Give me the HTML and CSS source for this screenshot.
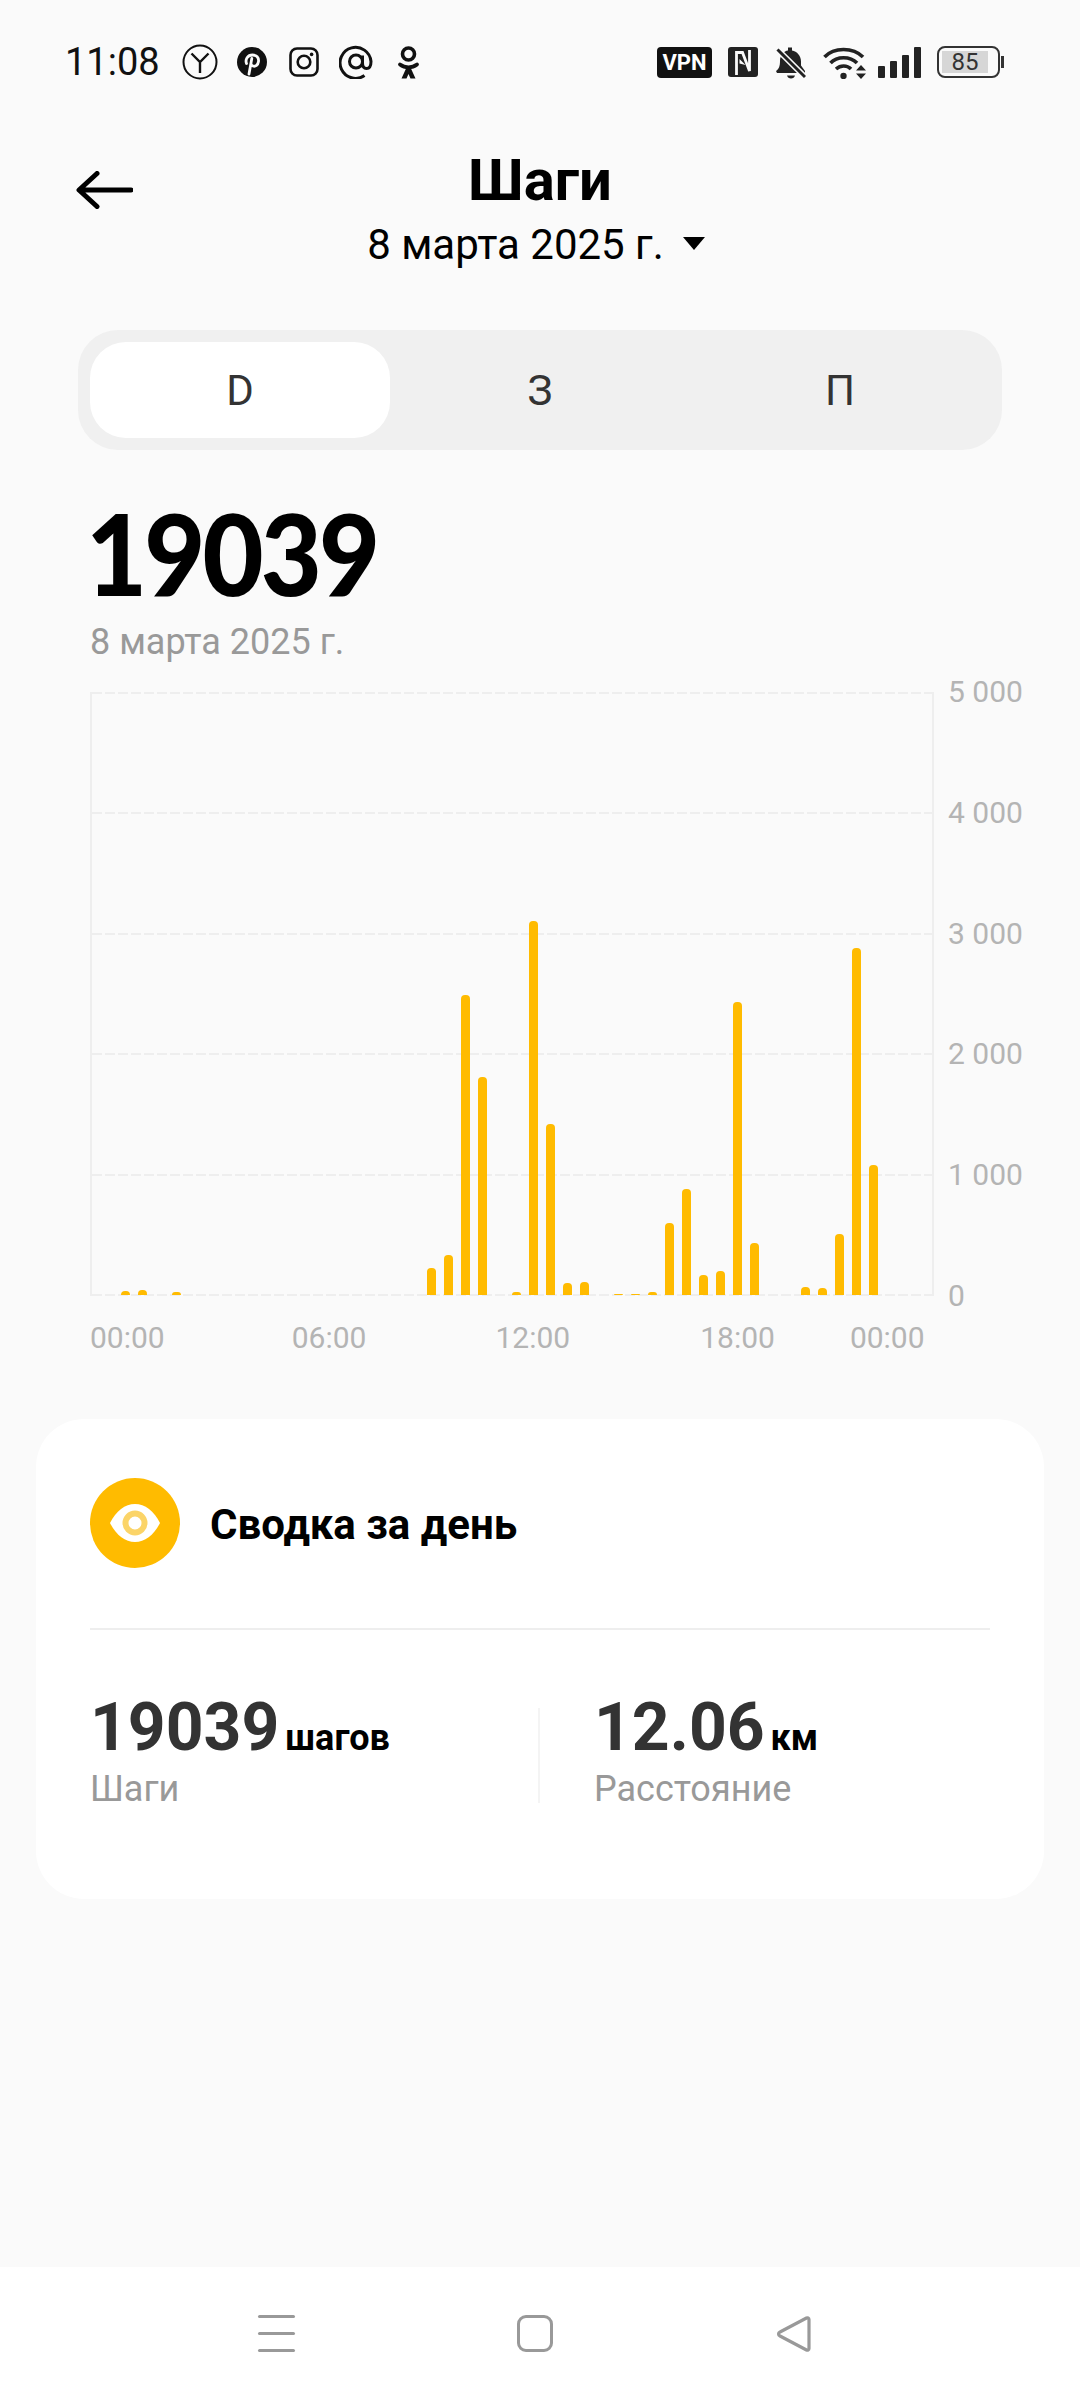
FILE: index.html
```html
<!DOCTYPE html>
<html lang="ru">

<head>
    <meta charset="utf-8">
    <title>Шаги</title>
    <link rel="stylesheet" href="styles.css">
</head>

<body>
    <div class="status-bar">
        <div class="time">11:08</div>
        <svg class="ic ic-ya" viewBox="0 0 36 36">
            <circle cx="18" cy="18" r="16.5" fill="none" stroke="#111" stroke-width="2"/>
            <path d="M9.500 9.500l8.500 8.500 8.500-8.500M18 18V29" fill="none" stroke="#111" stroke-width="2.400"/>
        </svg>
        <svg class="ic ic-pin" viewBox="0 0 30 30">
            <circle cx="15" cy="15" r="15" fill="#111"/>
            <path d="M9.500 16.500c-1.500-4 1-8.500 6-8.500 4 0 6.500 2.500 6 6.500-.5 3.500-3 5.500-5.500 4.500-1.500-.5-2-1.500-2-2.500M14.800 11.500L12 27" fill="none" stroke="#fafafa" stroke-width="2.800" stroke-linecap="round"/>
        </svg>
        <svg class="ic ic-insta" viewBox="0 0 30 30">
            <rect x="1.500" y="1.500" width="27" height="27" rx="6.500" fill="none" stroke="#111" stroke-width="2.600"/>
            <circle cx="15" cy="15" r="6.300" fill="none" stroke="#111" stroke-width="2.600"/>
            <circle cx="22.600" cy="7.400" r="1.800" fill="#111"/>
        </svg>
        <svg class="ic ic-at" viewBox="0 0 34 34">
            <path d="M25.500 30.500A15.500 15.500 0 1 1 32 16.500c0 4-1.500 7-4.500 7s-4-2.500-4-5.500v-7.500M23.500 16.500a6.500 6.500 0 1 1-13 0 6.500 6.500 0 0 1 13 0z" fill="none" stroke="#111" stroke-width="3"/>
        </svg>
        <svg class="ic ic-ok" viewBox="0 0 23 33">
            <circle cx="11.500" cy="8" r="6" fill="none" stroke="#111" stroke-width="3.600"/>
            <path d="M3 18.500c5 3.800 12 3.800 17 0" fill="none" stroke="#111" stroke-width="3.800" stroke-linecap="round"/>
            <path d="M9.500 21.500L4.500 32.500h5l2-4.500 2 4.500h5L13.500 21.500z" fill="#111"/>
        </svg>
        <div class="status-right">
            <span class="vpn">VPN</span>
            <svg class="ic ic-nfc" viewBox="0 0 30 30">
                <rect width="30" height="30" rx="3" fill="#222"/>
                <path d="M8.500 28V5.500h6L21.500 24V3" fill="none" stroke="#fafafa" stroke-width="2.800"/>
                <path d="M11.500 12l6 6-6-1.500z" fill="#fafafa"/>
            </svg>
            <svg class="ic ic-bell" viewBox="0 0 30 33">
                <path d="M0 25c3-2 4-5 4-10C4 9 8 5 12 4.500V1.500h4v3c5 1 9 5 9 11v4l4 5.500V27H1z" fill="#222"/>
                <path d="M11 29.500h8c-.5 2-2 3-4 3s-3.500-1-4-3z" fill="#222"/>
                <path d="M2 4l26 26" stroke="#fafafa" stroke-width="6"/>
                <path d="M1.500 3.500L29 31" stroke="#222" stroke-width="3"/>
            </svg>
            <svg class="ic ic-wifi" viewBox="0 0 44 33">
                <path d="M1.500 11C11 1 30 1 40 11M7.500 17C14 10 27 10 34 17M13 23c4.500-4 11-4 15 0" fill="none" stroke="#222" stroke-width="3.600"/>
                <circle cx="20.500" cy="30" r="3.200" fill="#222"/>
                <path d="M33 24.500l5-5.500 5 5.500zM33 27.500l5 5.500 5-5.500z" fill="#222"/>
            </svg>
            <svg class="ic ic-signal" viewBox="0 0 43 31">
                <rect x="0" y="19" width="7" height="12" rx="1" fill="#222"/>
                <rect x="12" y="14" width="7" height="17" rx="1" fill="#222"/>
                <rect x="24" y="8" width="7" height="23" rx="1" fill="#222"/>
                <rect x="36" y="0" width="7" height="31" rx="1" fill="#222"/>
            </svg>
            <div class="battery">
                <div class="battery-body"><span class="battery-fill">85</span></div>
                <div class="battery-tip"></div>
            </div>
        </div>
    </div>

    <div class="header">
        <svg class="back" viewBox="0 0 57 38">
            <path d="M55 19H4M21 2.500L3 19l18 16.500" fill="none" stroke="#000" stroke-width="5" stroke-linecap="round" stroke-linejoin="round"/>
        </svg>
        <h1>Шаги</h1>
        <div class="header-date">8 марта 2025 г.<span class="caret"></span></div>
    </div>

    <div class="tabs">
        <div class="tab active">D</div>
        <div class="tab">З</div>
        <div class="tab">П</div>
    </div>

    <div class="total">
        <div class="total-num">19039</div>
        <div class="total-date">8 марта 2025 г.</div>
    </div>

    <div class="chart">
        <div class="plot">
            <div class="grid-lines">
                <div class="grid-line"></div>
                <div class="grid-line"></div>
                <div class="grid-line"></div>
                <div class="grid-line"></div>
                <div class="grid-line"></div>
                <div class="grid-line"></div>
            </div>
            <div class="bars">
                <div class="bar" style="height:4px"></div>
                <div class="bar" style="height:5px"></div>
                <div class="bar"></div>
                <div class="bar" style="height:3px"></div>
                <div class="bar"></div>
                <div class="bar"></div>
                <div class="bar"></div>
                <div class="bar"></div>
                <div class="bar"></div>
                <div class="bar"></div>
                <div class="bar"></div>
                <div class="bar"></div>
                <div class="bar"></div>
                <div class="bar"></div>
                <div class="bar"></div>
                <div class="bar"></div>
                <div class="bar"></div>
                <div class="bar"></div>
                <div class="bar" style="height:27px"></div>
                <div class="bar" style="height:40px"></div>
                <div class="bar" style="height:300px"></div>
                <div class="bar" style="height:218px"></div>
                <div class="bar"></div>
                <div class="bar" style="height:3px"></div>
                <div class="bar" style="height:374px"></div>
                <div class="bar" style="height:171px"></div>
                <div class="bar" style="height:12px"></div>
                <div class="bar" style="height:13px"></div>
                <div class="bar"></div>
                <div class="bar" style="height:1px"></div>
                <div class="bar" style="height:1px"></div>
                <div class="bar" style="height:3px"></div>
                <div class="bar" style="height:72px"></div>
                <div class="bar" style="height:106px"></div>
                <div class="bar" style="height:20px"></div>
                <div class="bar" style="height:24px"></div>
                <div class="bar" style="height:293px"></div>
                <div class="bar" style="height:52px"></div>
                <div class="bar"></div>
                <div class="bar"></div>
                <div class="bar" style="height:8px"></div>
                <div class="bar" style="height:7px"></div>
                <div class="bar" style="height:61px"></div>
                <div class="bar" style="height:347px"></div>
                <div class="bar" style="height:130px"></div>
            </div>
        </div>
        <div class="y-axis">
            <div>5 000</div>
            <div>4 000</div>
            <div>3 000</div>
            <div>2 000</div>
            <div>1 000</div>
            <div>0</div>
        </div>
        <div class="x-axis">
            <div>00:00</div>
            <div>06:00</div>
            <div>12:00</div>
            <div>18:00</div>
            <div class="x-last">00:00</div>
        </div>
    </div>

    <div class="card">
        <div class="card-head">
            <div class="eye-badge">
                <svg class="eye" viewBox="0 0 50 38">
                    <path d="M0 19C6 7 15 0 25 0s19 7 25 19c-6 12-15 19-25 19S6 31 0 19z" fill="#fff"/>
                    <circle cx="25" cy="19" r="9.500" fill="none" stroke="#fbd468" stroke-width="6"/>
                </svg>
            </div>
            <div class="card-title">Сводка за день</div>
        </div>
        <div class="stats">
            <div class="stat">
                <div class="stat-value">19039<span class="unit">шагов</span></div>
                <div class="stat-label">Шаги</div>
            </div>
            <div class="stat stat-second">
                <div class="stat-value">12.06<span class="unit">км</span></div>
                <div class="stat-label">Расстояние</div>
            </div>
        </div>
    </div>

    <div class="nav-bar">
        <div class="nav-menu">
            <div></div>
            <div></div>
            <div></div>
        </div>
        <div class="nav-home"></div>
        <svg class="nav-back" viewBox="0 0 36 38">
            <path d="M33 4.500v29c0 1.500-1.500 2-2.500 1.500L4 21c-2-1-2-3 0-4L30.500 3c1-.5 2.500 0 2.500 1.500z" fill="none" stroke="#999" stroke-width="3.200" stroke-linejoin="round"/>
        </svg>
    </div>
</body>

</html>
```

FILE: styles.css
```css
* {
    box-sizing: border-box;
}

body {
    display: flex;
    flex-direction: column;
    width: 1080px;
    height: 2400px;
    margin: 0;
    overflow: hidden;
    background: #fafafa;
    color: #000;
    font-family: Roboto, 'Noto Sans', sans-serif;
}

.status-bar {
    display: flex;
    align-items: center;
    height: 124px;
    padding: 0 76px 0 65px;
}

.time {
    width: 117px;
    color: #111;
    font-size: 38px;
    line-height: 40px;
}

.ic {
    display: block;
    flex: none;
}

.ic-ya {
    width: 36px;
    height: 36px;
}

.ic-pin {
    width: 30px;
    height: 30px;
    margin-left: 19px;
}

.ic-insta {
    width: 30px;
    height: 30px;
    margin-left: 22px;
}

.ic-at {
    width: 34px;
    height: 34px;
    margin-left: 20px;
}

.ic-ok {
    width: 23px;
    height: 33px;
    margin-left: 24px;
}

.status-right {
    display: flex;
    align-items: center;
    margin-left: auto;
}

.vpn {
    width: 55px;
    height: 31px;
    background: #111;
    border-radius: 4px;
    color: #fff;
    font-size: 22px;
    font-weight: 700;
    line-height: 31px;
    text-align: center;
}

.ic-nfc {
    width: 30px;
    height: 30px;
    margin-left: 16px;
}

.ic-bell {
    width: 30px;
    height: 33px;
    margin-left: 18px;
}

.ic-wifi {
    width: 44px;
    height: 33px;
    margin-left: 17px;
}

.ic-signal {
    width: 43px;
    height: 31px;
    margin-left: 11px;
}

.battery {
    display: flex;
    align-items: center;
    margin-left: 16px;
}

.battery-body {
    width: 63px;
    height: 32px;
    padding: 3px;
    border: 2px solid #333;
    border-radius: 8px;
}

.battery-fill {
    display: block;
    width: 46px;
    height: 100%;
    background: #d6d6d6;
    color: #333;
    font-size: 24px;
    line-height: 22px;
    text-align: center;
}

.battery-tip {
    width: 3px;
    height: 12px;
    margin-left: 1px;
    background: #333;
}

.header {
    position: relative;
    height: 206px;
    text-align: center;
}

.back {
    position: absolute;
    left: 76px;
    top: 47px;
    width: 57px;
    height: 38px;
}

h1 {
    margin: 0;
    padding-top: 25px;
    font-size: 58px;
    font-weight: 700;
    line-height: 62px;
}

.header-date {
    display: flex;
    align-items: center;
    justify-content: center;
    margin-top: 10px;
    padding-right: 8px;
    font-size: 42px;
    line-height: 48px;
}

.caret {
    width: 0;
    height: 0;
    margin: 0 0 4px 19px;
    border-top: 13px solid #000;
    border-left: 11px solid transparent;
    border-right: 11px solid transparent;
}

.tabs {
    display: flex;
    width: 924px;
    height: 120px;
    margin-left: 78px;
    padding: 12px;
    background: #f0f0f0;
    border-radius: 40px;
}

.tab {
    width: 300px;
    border-radius: 36px;
    color: #333;
    font-size: 42px;
    line-height: 98px;
    text-align: center;
}

.tab.active {
    background: #fff;
}

.total {
    padding: 33px 0 0 90px;
}

.total-num {
    margin-left: -4px;
    font-family: Lato, Inter, sans-serif;
    font-size: 112px;
    font-weight: 900;
    line-height: 139px;
    letter-spacing: -3px;
    transform: scaleX(0.94);
    transform-origin: left center;
}

.total-date {
    color: #999;
    font-size: 36px;
    line-height: 40px;
}

.chart {
    display: grid;
    grid-template-columns: 844px auto;
    margin: 30px 0 0 90px;
}

.plot {
    display: grid;
    height: 604px;
    border-left: 2px solid #eeeeee;
    border-right: 2px solid #eeeeee;
}

.grid-lines,
.bars {
    grid-area: 1 / 1;
}

.grid-lines {
    display: flex;
    flex-direction: column;
    justify-content: space-between;
}

.grid-line {
    height: 2px;
    background: repeating-linear-gradient(90deg, #eeeeee 0 10px, transparent 10px 13px);
}

.bars {
    display: flex;
    align-items: flex-end;
    gap: 8.5px;
    padding: 0 0 1px 29px;
}

.bar {
    flex: none;
    width: 8.5px;
    background: #ffbb00;
    border-radius: 4px 4px 0 0;
}

.y-axis {
    display: flex;
    flex-direction: column;
    justify-content: space-between;
    height: 636px;
    margin: -16px 0 -16px 14px;
    color: #b4b4b4;
    font-size: 30px;
    line-height: 32px;
}

.x-axis {
    display: flex;
    width: 834px;
    margin-top: 18px;
    color: #b4b4b4;
    font-size: 30px;
    line-height: 48px;
}

.x-axis div:nth-child(2) {
    margin-left: 127px;
}

.x-axis div:nth-child(3) {
    margin-left: 129px;
}

.x-axis div:nth-child(4) {
    margin-left: 130px;
}

.x-axis .x-last {
    margin-left: 75px;
}

.card {
    width: 1008px;
    height: 480px;
    margin: 57px 0 0 36px;
    padding: 60px 54px 0;
    background: #fff;
    border-radius: 48px;
}

.card-head {
    display: flex;
    align-items: center;
    gap: 30px;
    height: 151px;
    padding-bottom: 61px;
    border-bottom: 2px solid #eeeeee;
}

.eye-badge {
    display: flex;
    align-items: center;
    justify-content: center;
    width: 90px;
    height: 90px;
    background: #ffbb00;
    border-radius: 50%;
}

.eye {
    width: 50px;
    height: 38px;
}

.card-title {
    padding-top: 4px;
    font-size: 42px;
    font-weight: 700;
    line-height: 44px;
}

.stats {
    display: flex;
    margin-top: 78px;
}

.stat {
    width: 450px;
    height: 95px;
    border-right: 2px solid #f4f4f4;
}

.stat-second {
    padding-left: 54px;
    border-right: 0;
}

.stat-value {
    margin-top: -10px;
    color: #333;
    font-size: 66px;
    font-weight: 700;
    line-height: 60px;
}

.unit {
    margin-left: 6px;
    color: #000;
    font-size: 36px;
}

.stat-label {
    margin-top: 1px;
    color: #999;
    font-size: 36px;
    line-height: 40px;
}

.nav-bar {
    display: flex;
    align-items: center;
    height: 133px;
    margin-top: auto;
    padding-left: 258px;
    background: #fff;
}

.nav-menu {
    display: flex;
    flex-direction: column;
    justify-content: space-between;
    width: 37px;
    height: 37px;
}

.nav-menu div {
    height: 3px;
    background: #999;
    border-radius: 2px;
}

.nav-home {
    width: 36px;
    height: 37px;
    margin-left: 222px;
    border: 3px solid #999;
    border-radius: 9px;
}

.nav-back {
    width: 36px;
    height: 38px;
    margin-left: 223px;
}
```
